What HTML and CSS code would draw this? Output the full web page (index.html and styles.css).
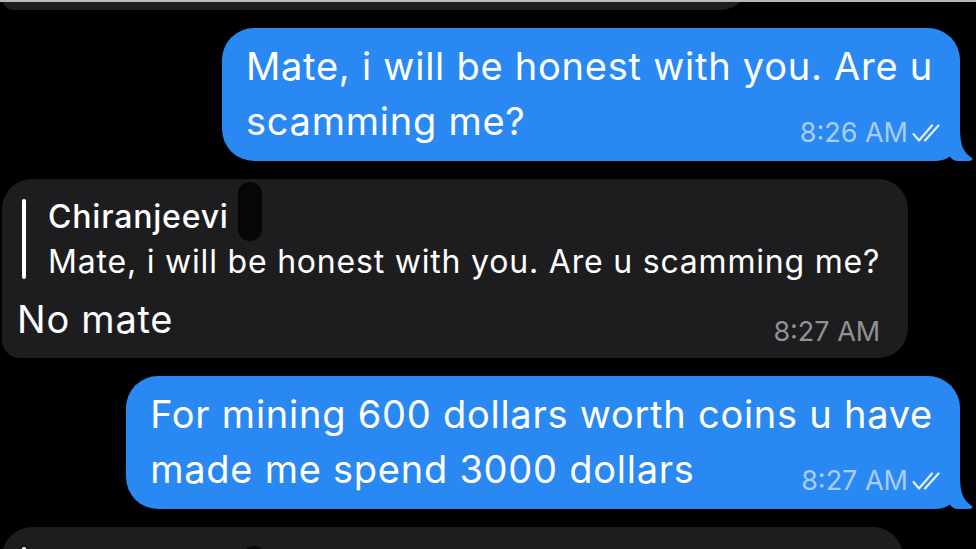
FILE: index.html
```html
<!DOCTYPE html>
<html lang="en">
<head>
    <meta charset="UTF-8">
    <title>Chat</title>
    <link rel="stylesheet" href="styles.css">
</head>
<body>
    <div class="chat">
        <div class="row in">
            <div class="bubble in cut"></div>
        </div>

        <div class="row out">
            <div class="bubble out">
                <div class="text">Mate, i will be honest with you. Are u<br>scamming me?</div>
                <div class="meta">
                    <span>8:26 AM</span>
                    <svg class="ticks" viewBox="0 0 30 20"><path d="M1.5 11 L7 17.5 L20 2.5 M13 17.5 L26.5 2.5"/></svg>
                </div>
                <svg class="tail" viewBox="0 0 36 32"><path d="M20 0 C20 17 24 24 32 29 Q34 32 28 32 L18 32 Q12 32 9 26 L9 12 Z"/></svg>
            </div>
        </div>

        <div class="row in">
            <div class="bubble in">
                <div class="reply">
                    <div class="reply-name">Chiranjeevi</div>
                    <div class="reply-text">Mate, i will be honest with you. Are u scamming me?</div>
                    <span class="blot"></span>
                </div>
                <div class="text">No mate</div>
                <div class="meta">
                    <span>8:27 AM</span>
                </div>
            </div>
        </div>

        <div class="row out">
            <div class="bubble out">
                <div class="text">For mining 600 dollars worth coins u have<br>made me spend 3000 dollars</div>
                <div class="meta">
                    <span>8:27 AM</span>
                    <svg class="ticks" viewBox="0 0 30 20"><path d="M1.5 11 L7 17.5 L20 2.5 M13 17.5 L26.5 2.5"/></svg>
                </div>
                <svg class="tail" viewBox="0 0 36 32"><path d="M20 0 C20 17 24 24 32 29 Q34 32 28 32 L18 32 Q12 32 9 26 L9 12 Z"/></svg>
            </div>
        </div>

        <div class="row in">
            <div class="bubble in last">
                <div class="reply">
                    <div class="reply-name">&nbsp;</div>
                    <span class="blot"></span>
                </div>
            </div>
        </div>
    </div>
</body>
</html>
```

FILE: styles.css
```css
*{
    margin:0;
    padding:0;
    box-sizing: border-box;
}
html,body{
    width:976px;
    height:549px;
    overflow: hidden;
    background: #000;
}
body{
    font-family: Inter, "Liberation Sans", Arial, sans-serif;
    color:#fff;
    border-top:2px solid #b9b9b9;
}
.chat{
    display: flex;
    flex-direction: column;
    gap:18px;
}
.row{
    display: flex;
}
.row.in{
    justify-content: flex-start;
    padding-left:2px;
}
.row.out{
    justify-content: flex-end;
    padding-right:16px;
}
.bubble{
    position: relative;
    border-radius: 32px;
}
.bubble.out{
    background: #2a88f2;
    padding:11px 27px 14px 24px;
    border-bottom-right-radius: 24px;
}
.bubble.in{
    background: #1d1d1f;
    padding:15px 28px 12px 15px;
    border-radius: 30px;
    border-bottom-left-radius: 18px;
}
.bubble.cut{
    width:748px;
    height:40px;
    margin-top:-32px;
    padding:0;
    border-radius: 0 0 30px 12px;
    background: #1e1e20;
}
.bubble.last{
    width:901px;
    height:80px;
}
.text{
    font-size:38px;
    line-height:55px;
    letter-spacing: 0.75px;
    white-space: nowrap;
}
.bubble.in .text{
    line-height:50px;
}
.meta{
    display: flex;
    justify-content: flex-end;
    align-items: center;
    gap:4px;
    height:28px;
    margin-top:-30px;
    margin-right:-9px;
    font-size:27px;
    line-height:28px;
    color: rgba(255,255,255,0.6);
}
.bubble.in .meta{
    margin-top:-26px;
    margin-right:0;
    color:#919196;
}
.ticks{
    width:30px;
    height:20px;
    fill:none;
    stroke:#e4eefc;
    stroke-width:2.2;
    stroke-linecap: round;
    stroke-linejoin: round;
}
.tail{
    position: absolute;
    right:-16px;
    bottom:0;
    width:36px;
    height:32px;
    fill:#2a88f2;
}
.reply{
    position: relative;
    margin-left:5px;
    margin-bottom:10px;
    padding-left:26px;
    font-size:32px;
    line-height:45px;
    letter-spacing: 0.8px;
    white-space: nowrap;
}
.reply::before{
    content:"";
    position: absolute;
    left:0;
    top:5px;
    bottom:5px;
    width:4px;
    border-radius: 2px;
    background: #fff;
}
.reply-name{
    font-weight: 500;
}
.blot{
    position: absolute;
    left:216px;
    top:-12px;
    width:24px;
    height:59px;
    border-radius: 12px;
    background: #060606;
}
.bubble.last .blot{
    left:220px;
    top:4px;
}
```
